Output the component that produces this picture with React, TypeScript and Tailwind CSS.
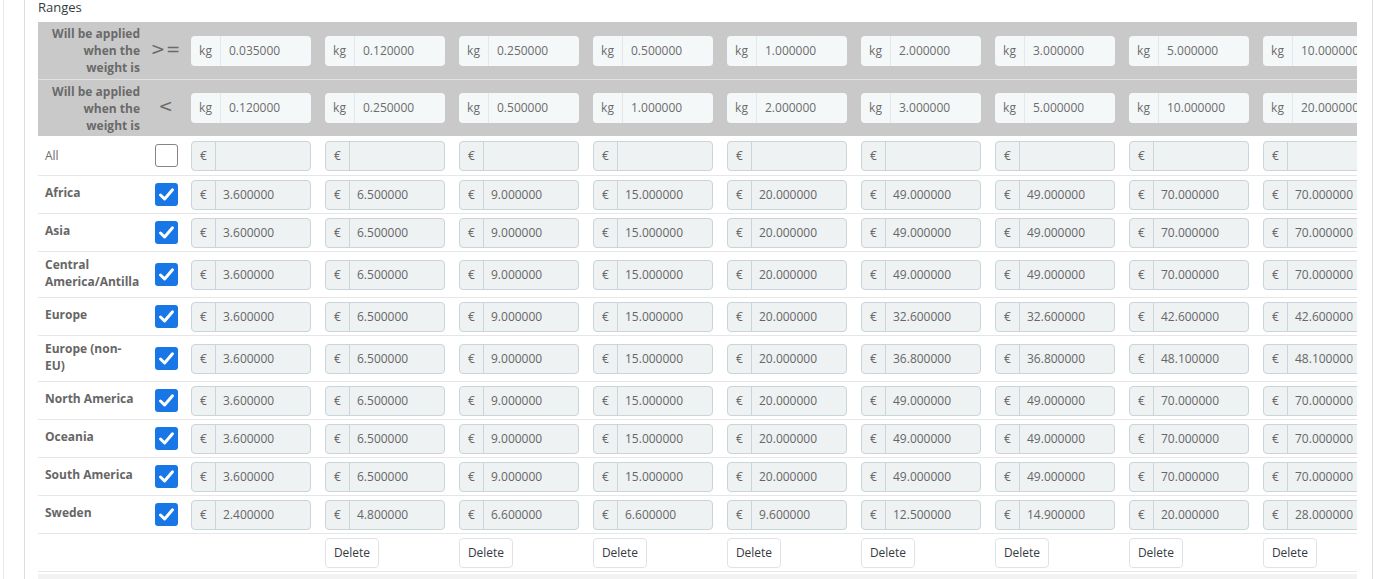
import React from "react";

const fromValues = ["0.035000", "0.120000", "0.250000", "0.500000", "1.000000", "2.000000", "3.000000", "5.000000", "10.000000"];
const toValues = ["0.120000", "0.250000", "0.500000", "1.000000", "2.000000", "3.000000", "5.000000", "10.000000", "20.000000"];

const standard = ["3.600000", "6.500000", "9.000000", "15.000000", "20.000000", "49.000000", "49.000000", "70.000000", "70.000000"];

const zones: Array<{ name: string; tall?: boolean; prices: string[] }> = [
  { name: "Africa", prices: standard },
  { name: "Asia", prices: standard },
  { name: "Central America/Antilla", tall: true, prices: standard },
  {
    name: "Europe",
    prices: ["3.600000", "6.500000", "9.000000", "15.000000", "20.000000", "32.600000", "32.600000", "42.600000", "42.600000"]
  },
  {
    name: "Europe (non-EU)",
    tall: true,
    prices: ["3.600000", "6.500000", "9.000000", "15.000000", "20.000000", "36.800000", "36.800000", "48.100000", "48.100000"]
  },
  { name: "North America", prices: standard },
  { name: "Oceania", prices: standard },
  { name: "South America", prices: standard },
  {
    name: "Sweden",
    prices: ["2.400000", "4.800000", "6.600000", "6.600000", "9.600000", "12.500000", "14.900000", "20.000000", "28.000000"]
  }
];

function RangeField({ value }: { value: string }) {
  return (
    <div className="flex h-[30px] w-[120px] shrink-0 rounded-[4px] bg-[#f5f8f9] text-[12px] text-[#6c6c6c]">
      <span className="flex w-[30px] items-center justify-center border-r border-[#e4e8ea]">kg</span>
      <span className="flex items-center whitespace-nowrap pl-[8px]">{value}</span>
    </div>
  );
}

function PriceField({ value }: { value: string }) {
  return (
    <div className="flex h-[30px] w-[120px] shrink-0 rounded-[4px] border border-[#c9d5d8] bg-[#eef2f3] text-[12px] text-[#666666]">
      <span className="flex w-[24px] items-center justify-center border-r border-[#c9d5d8]">€</span>
      <span className="flex items-center whitespace-nowrap pl-[7px]">{value}</span>
    </div>
  );
}

function Checkbox({ checked }: { checked: boolean }) {
  if (!checked) {
    return <div className="h-[23px] w-[23px] rounded-[3px] border border-[#858585] bg-white" />;
  }
  return (
    <div className="flex h-[23px] w-[23px] items-center justify-center rounded-[3px] bg-[#1976e6]">
      <svg width="19" height="19" viewBox="0 0 19 19" fill="none">
        <path d="M3.5 10 L7.6 14 L15.5 4.8" stroke="white" strokeWidth="3" strokeLinecap="round" strokeLinejoin="round" />
      </svg>
    </div>
  );
}

function HeaderRow({ sign, values, height }: { sign: string; values: string[]; height: string }) {
  return (
    <div className={`flex bg-[#c9c9c9] ${height}`}>
      <div className="flex w-[110px] shrink-0 items-center justify-end pr-[8px] text-right text-[12px] font-bold leading-[17px] text-[#6a6a6a]">
        <span>
          Will be applied
          <br />
          when the
          <br />
          weight is
        </span>
      </div>
      <div className="flex w-[36px] shrink-0 items-center justify-center pb-[2px] font-['DejaVu_Sans',sans-serif] text-[17px] tracking-[1px] text-[#6a6a6a]">
        {sign}
      </div>
      {values.map((value, index) => (
        <div key={index} className="flex w-[134px] shrink-0 items-center px-[7px]">
          <RangeField value={value} />
        </div>
      ))}
    </div>
  );
}

export default function App() {
  return (
    <div className="h-[579px] overflow-hidden bg-white pl-[3px] font-['Open_Sans',sans-serif]">
      <div className="h-full border-l border-[#e8e8e8] pl-[20px]">
        <div className="flex h-full w-[1349px] flex-col border-x border-[#dddddd] pl-[13px] pr-[15px]">
          <div className="h-[22px] pt-[1px] text-[13px] leading-[13px] text-[#363a41]">Ranges</div>

          <div className="overflow-hidden">
            <div className="w-[1352px]">
              <HeaderRow sign=">=" values={fromValues} height="h-[58px] border-b border-[#e2e2e2]" />
              <HeaderRow sign="<" values={toValues} height="h-[56px]" />

              <div className="flex h-[40px] items-center border-b border-[#e6e6e6]">
                <div className="w-[110px] shrink-0 px-[7px] text-[12px] text-[#6c6c6c]">All</div>
                <div className="flex w-[36px] shrink-0 justify-center">
                  <Checkbox checked={false} />
                </div>
                {fromValues.map((_, index) => (
                  <div key={index} className="w-[134px] shrink-0 px-[7px]">
                    <PriceField value="" />
                  </div>
                ))}
              </div>

              {zones.map((zone) => (
                <div
                  key={zone.name}
                  className={`flex items-center border-b border-[#e6e6e6] ${zone.tall ? "h-[46px]" : "h-[38px]"}`}
                >
                  <div className="w-[110px] shrink-0 px-[7px] pb-[4px] text-[12px] font-bold leading-[17px] text-[#666666]">
                    {zone.name}
                  </div>
                  <div className="flex w-[36px] shrink-0 justify-center">
                    <Checkbox checked />
                  </div>
                  {zone.prices.map((price, index) => (
                    <div key={index} className="w-[134px] shrink-0 px-[7px]">
                      <PriceField value={price} />
                    </div>
                  ))}
                </div>
              ))}

              <div className="flex h-[38px] items-center border-b border-[#e6e6e6]">
                <div className="w-[110px] shrink-0" />
                <div className="w-[36px] shrink-0" />
                {fromValues.map((_, index) => (
                  <div key={index} className="w-[134px] shrink-0 px-[7px]">
                    {index > 0 ? (
                      <button className="h-[30px] w-[54px] rounded-[4px] border border-[#dfe3e5] bg-white text-[12px] text-[#363a41]">
                        Delete
                      </button>
                    ) : null}
                  </div>
                ))}
              </div>
            </div>
          </div>

          <div className="mt-[2px] flex-1 bg-[#f2f2f2]" />
        </div>
      </div>
    </div>
  );
}
